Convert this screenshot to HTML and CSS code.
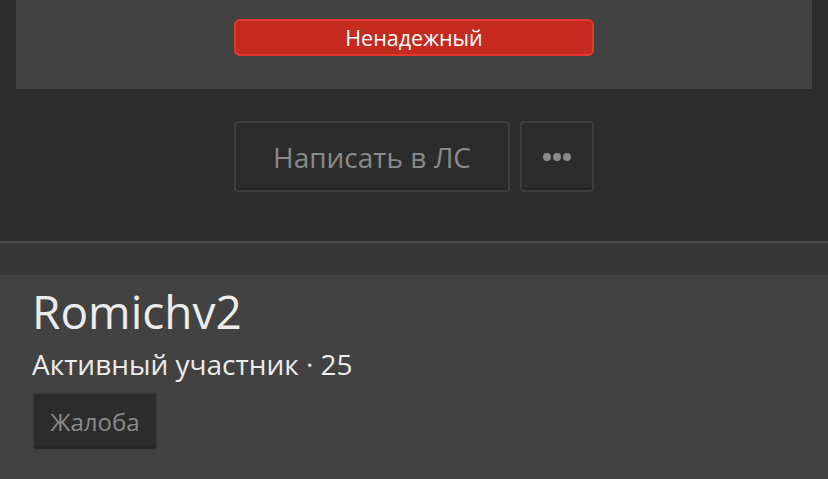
FILE: index.html
```html
<!DOCTYPE html>
<html lang="ru">
<head>
  <meta charset="UTF-8" />
  <meta name="viewport" content="width=device-width, initial-scale=1" />
  <title>Romichv2</title>
  <link rel="stylesheet" href="styles.css">
</head>
<body>

  <!-- Блок статуса -->
  <div class="panel-estado">
    <span class="insignia-roja">Ненадежный</span>
  </div>

  <!-- Кнопки действий -->
  <div class="acciones">
    <button class="boton boton-ls">Написать в ЛС</button>
    <button class="boton boton-mas" aria-label="Ещё">
      <span class="punto"></span><span class="punto"></span><span class="punto"></span>
    </button>
  </div>

  <div class="separador"></div>
  <div class="franja"></div>

  <!-- Профиль -->
  <div class="perfil">
    <h1 class="nombre">Romichv2</h1>
    <div class="rango">Активный участник · 25</div>
    <button class="boton boton-queja">Жалоба</button>
  </div>

</body>
</html>
```

FILE: styles.css
```css
:root {
  --fondo: #2c2c2c;
  --panel: #424242;
  --franja: #373737;
  --borde: #3d3d3d;
  --texto: #ececec;
  --texto-suave: #8a8a8a;
  --rojo: #c52a1e;
  --rojo-borde: #e3382c;
}

* {
  margin: 0;
  padding: 0;
  box-sizing: border-box;
}

body {
  font-family: 'Open Sans', 'Noto Sans', sans-serif;
  background: var(--fondo);
  color: var(--texto);
  height: 100vh;
  overflow: hidden;
  display: flex;
  flex-direction: column;
}

.panel-estado {
  background: var(--panel);
  margin: 0 16px;
  height: 89px;
  flex-shrink: 0;
  padding-top: 19px;
  display: flex;
  justify-content: center;
  align-items: flex-start;
}

.insignia-roja {
  width: 360px;
  height: 37px;
  background: var(--rojo);
  border: 2px solid var(--rojo-borde);
  border-radius: 6px;
  color: #fff;
  font-size: 21.5px;
  display: flex;
  align-items: center;
  justify-content: center;
}

.acciones {
  display: flex;
  justify-content: center;
  gap: 10px;
  margin-top: 32px;
  height: 71px;
  flex-shrink: 0;
}

.boton {
  font-family: inherit;
  background: var(--fondo);
  border: 2px solid var(--borde);
  border-radius: 4px;
  color: var(--texto-suave);
  box-shadow: inset 0 -3px 0 rgba(0, 0, 0, 0.12);
  cursor: pointer;
}

.boton-ls {
  width: 276px;
  font-size: 28px;
}

.boton-mas {
  width: 74px;
  display: flex;
  align-items: center;
  justify-content: center;
  gap: 2px;
}

.punto {
  width: 8px;
  height: 8px;
  border-radius: 50%;
  background: var(--texto-suave);
}

.separador {
  margin-top: 49px;
  height: 2px;
  flex-shrink: 0;
  background: #4b4b4b;
}

.franja {
  height: 32px;
  flex-shrink: 0;
  background: var(--franja);
}

.perfil {
  background: var(--panel);
  flex: 1;
  padding: 6px 32px 0;
}

.nombre {
  font-weight: normal;
  font-size: 46px;
  line-height: 60px;
  color: var(--texto);
}

.rango {
  font-size: 28px;
  line-height: 38px;
  margin-top: 4px;
}

.boton-queja {
  margin-top: 9px;
  width: 126px;
  height: 59px;
  font-size: 24px;
}
```
